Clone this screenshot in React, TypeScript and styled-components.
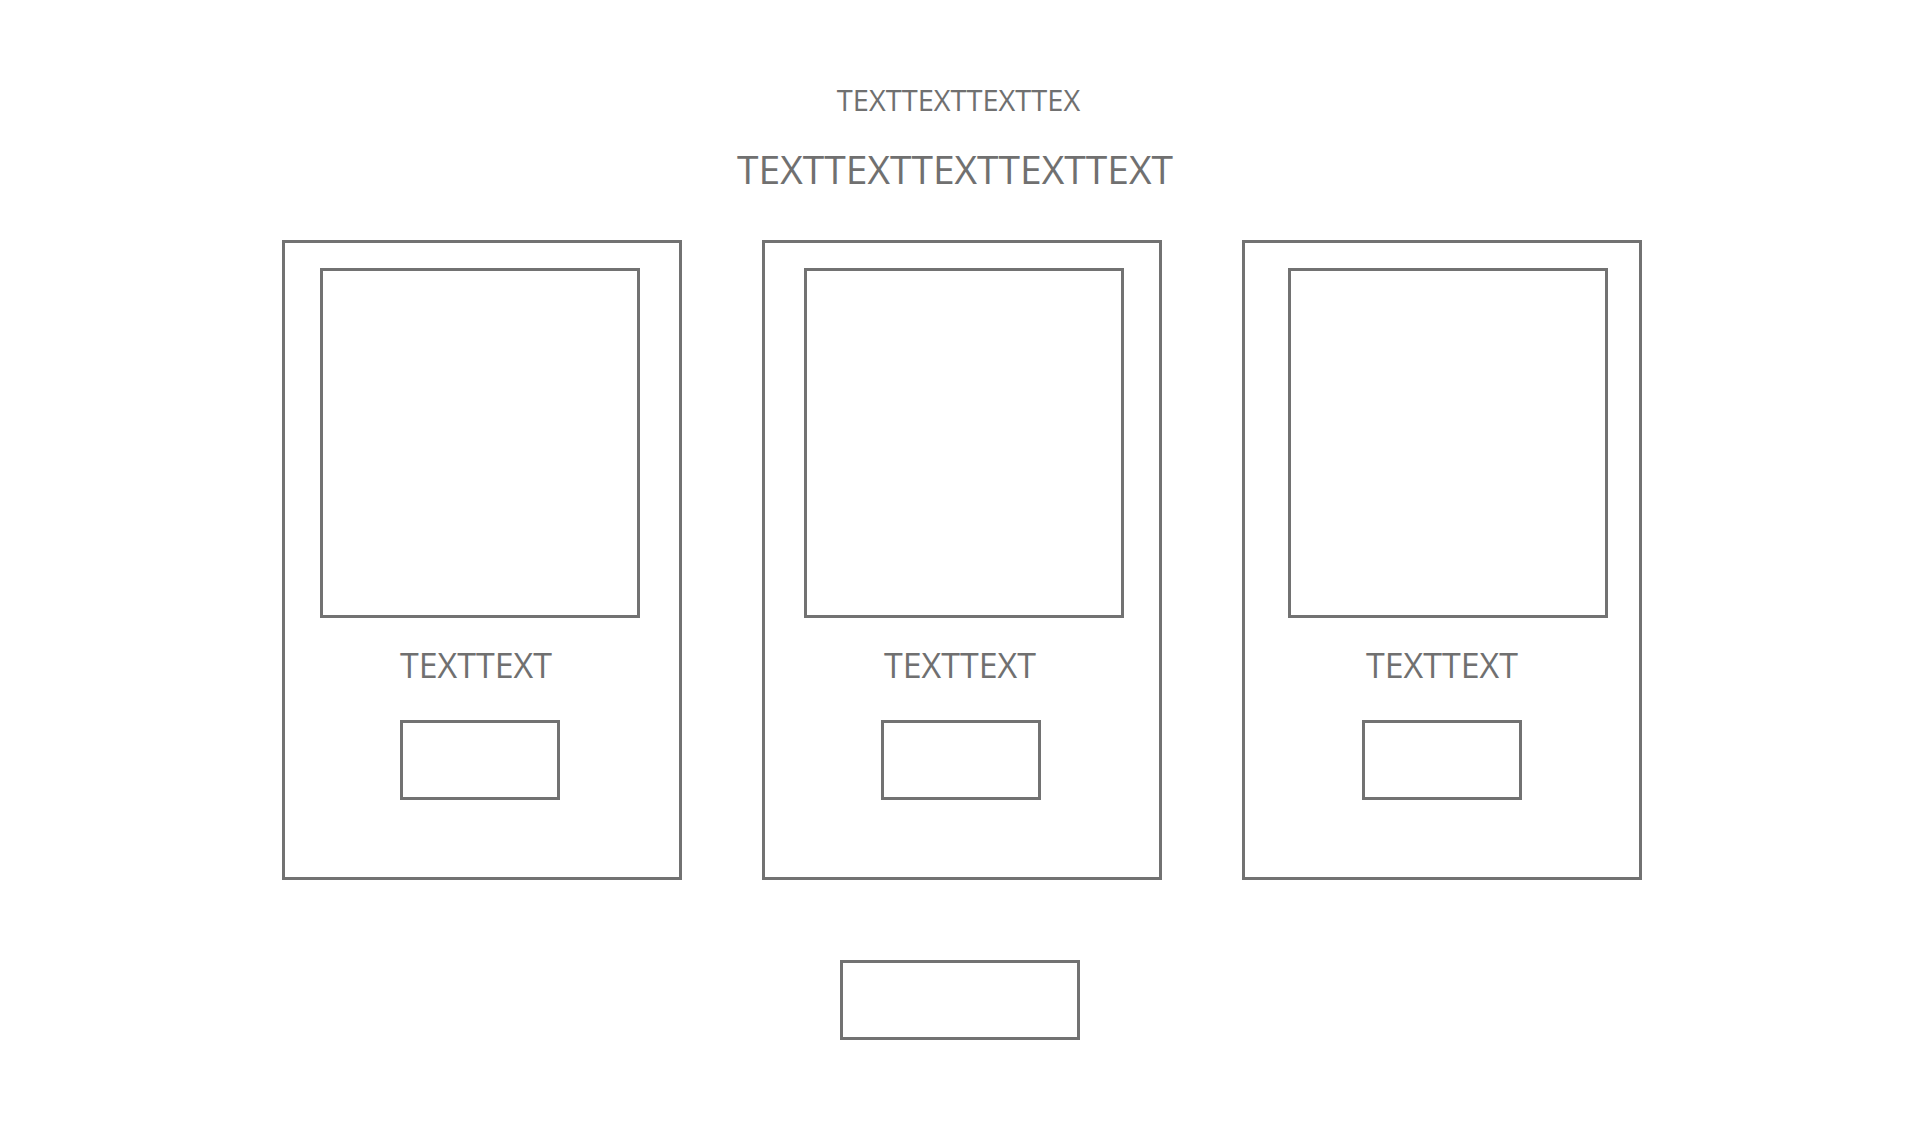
import styled, { createGlobalStyle } from "styled-components";

const GlobalStyle = createGlobalStyle`
  * {
    box-sizing: border-box;
  }
  body {
    margin: 0;
    background: #ffffff;
    font-family: "Open Sans", "Liberation Sans", sans-serif;
  }
`;

// each card is drawn a little off-centre in the mock, so keep the nudges
const cards = [
  { id: 1, shift: 35, labelNudge: 6, buttonNudge: 2, label: "TEXTTEXT" },
  { id: 2, shift: 39, labelNudge: 2, buttonNudge: 1, label: "TEXTTEXT" },
  { id: 3, shift: 43, labelNudge: 0, buttonNudge: 0, label: "TEXTTEXT" },
];

const App = () => {
  return (
    <Wrapper>
      <GlobalStyle />
      <SubTitle>TEXTTEXTTEXTTEX</SubTitle>
      <Title>TEXTTEXTTEXTTEXTTEXT</Title>
      <CardRow>
        {cards.map((card) => (
          <Card key={card.id}>
            <CardImage $shift={card.shift}></CardImage>
            <CardLabel $nudge={card.labelNudge}>{card.label}</CardLabel>
            <CardButton $nudge={card.buttonNudge}></CardButton>
          </Card>
        ))}
      </CardRow>
      <MoreButton></MoreButton>
    </Wrapper>
  );
};

export default App;

const Wrapper = styled.div`
  width: 100%;
  min-height: 1128px;
  padding-top: 80px;
  display: flex;
  flex-direction: column;
  align-items: center;
`;
const SubTitle = styled.div`
  margin-right: 3px;
  font-weight: 400;
  font-size: 29px;
  line-height: 40px;
  color: #707070;
`;
const Title = styled.div`
  margin-top: 23px;
  margin-right: 10px;
  font-weight: 400;
  font-size: 39px;
  line-height: 52px;
  color: #707070;
`;
const CardRow = styled.div`
  margin-top: 45px;
  padding-left: 4px;
  display: flex;
  flex-direction: row;
  justify-content: center;
  gap: 80px;
`;
const Card = styled.div`
  width: 400px;
  height: 640px;
  border: 3px solid #727272;
  padding-top: 25px;
  display: flex;
  flex-direction: column;
  align-items: center;
`;
const CardImage = styled.div<{ $shift: number }>`
  width: 320px;
  height: 350px;
  border: 3px solid #727272;
  align-self: flex-start;
  margin-left: ${(p) => p.$shift}px;
`;
const CardLabel = styled.div<{ $nudge: number }>`
  margin-top: 26px;
  margin-right: ${(p) => p.$nudge * 2}px;
  font-weight: 400;
  font-size: 34px;
  line-height: 42px;
  color: #707070;
`;
const CardButton = styled.div<{ $nudge: number }>`
  margin-top: 34px;
  margin-right: ${(p) => p.$nudge * 2}px;
  width: 160px;
  height: 80px;
  border: 3px solid #727272;
`;
const MoreButton = styled.div`
  margin-top: 80px;
  width: 240px;
  height: 80px;
  border: 3px solid #727272;
`;
